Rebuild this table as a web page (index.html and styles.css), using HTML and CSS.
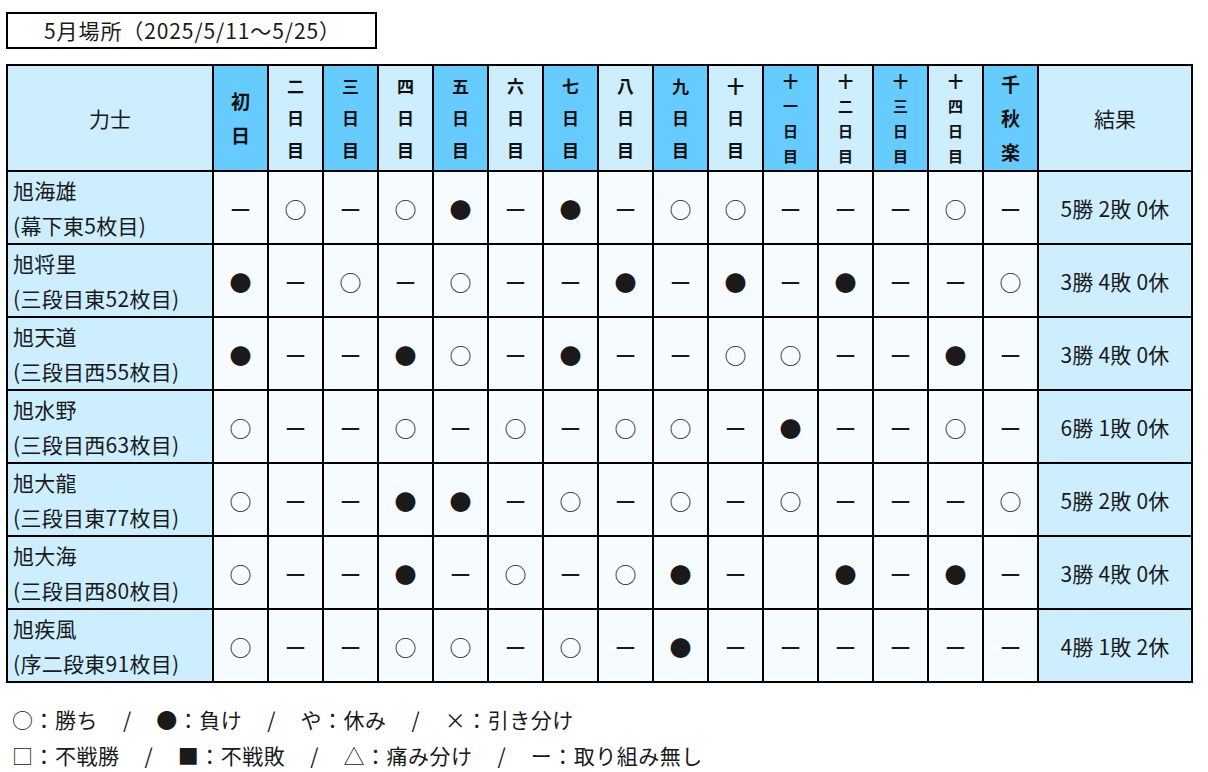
FILE: index.html
```html
<!DOCTYPE html>
<html lang="ja">
<head>
<meta charset="utf-8">
<title>5月場所</title>
<link rel="stylesheet" href="styles.css">
</head>
<body>
<div class="title">5月場所（2025/5/11～5/25）</div>
<table class="bansuke">
  <colgroup>
    <col class="c-name">
    <col class="c-day"><col class="c-day"><col class="c-day"><col class="c-day"><col class="c-day">
    <col class="c-day"><col class="c-day"><col class="c-day"><col class="c-day"><col class="c-day">
    <col class="c-day"><col class="c-day"><col class="c-day"><col class="c-day"><col class="c-day">
    <col class="c-res">
  </colgroup>
  <thead>
    <tr>
      <th class="h-name">力士</th>
      <th class="day odd big">初<br>日</th>
      <th class="day">二<br>日<br>目</th>
      <th class="day odd">三<br>日<br>目</th>
      <th class="day">四<br>日<br>目</th>
      <th class="day odd">五<br>日<br>目</th>
      <th class="day">六<br>日<br>目</th>
      <th class="day odd">七<br>日<br>目</th>
      <th class="day">八<br>日<br>目</th>
      <th class="day odd">九<br>日<br>目</th>
      <th class="day">十<br>日<br>目</th>
      <th class="day odd small">十<br>一<br>日<br>目</th>
      <th class="day small">十<br>二<br>日<br>目</th>
      <th class="day odd small">十<br>三<br>日<br>目</th>
      <th class="day small">十<br>四<br>日<br>目</th>
      <th class="day odd big">千<br>秋<br>楽</th>
      <th class="h-name">結果</th>
    </tr>
  </thead>
  <tbody>
    <tr>
      <td class="name">旭海雄<br>(幕下東5枚目)</td>
      <td>ー</td><td>○</td><td>ー</td><td>○</td><td>●</td><td>ー</td><td>●</td><td>ー</td><td>○</td><td>○</td><td>ー</td><td>ー</td><td>ー</td><td>○</td><td>ー</td>
      <td class="res">5勝 2敗 0休</td>
    </tr>
    <tr>
      <td class="name">旭将里<br>(三段目東52枚目)</td>
      <td>●</td><td>ー</td><td>○</td><td>ー</td><td>○</td><td>ー</td><td>ー</td><td>●</td><td>ー</td><td>●</td><td>ー</td><td>●</td><td>ー</td><td>ー</td><td>○</td>
      <td class="res">3勝 4敗 0休</td>
    </tr>
    <tr>
      <td class="name">旭天道<br>(三段目西55枚目)</td>
      <td>●</td><td>ー</td><td>ー</td><td>●</td><td>○</td><td>ー</td><td>●</td><td>ー</td><td>ー</td><td>○</td><td>○</td><td>ー</td><td>ー</td><td>●</td><td>ー</td>
      <td class="res">3勝 4敗 0休</td>
    </tr>
    <tr>
      <td class="name">旭水野<br>(三段目西63枚目)</td>
      <td>○</td><td>ー</td><td>ー</td><td>○</td><td>ー</td><td>○</td><td>ー</td><td>○</td><td>○</td><td>ー</td><td>●</td><td>ー</td><td>ー</td><td>○</td><td>ー</td>
      <td class="res">6勝 1敗 0休</td>
    </tr>
    <tr>
      <td class="name">旭大龍<br>(三段目東77枚目)</td>
      <td>○</td><td>ー</td><td>ー</td><td>●</td><td>●</td><td>ー</td><td>○</td><td>ー</td><td>○</td><td>ー</td><td>○</td><td>ー</td><td>ー</td><td>ー</td><td>○</td>
      <td class="res">5勝 2敗 0休</td>
    </tr>
    <tr>
      <td class="name">旭大海<br>(三段目西80枚目)</td>
      <td>○</td><td>ー</td><td>ー</td><td>●</td><td>ー</td><td>○</td><td>ー</td><td>○</td><td>●</td><td>ー</td><td></td><td>●</td><td>ー</td><td>●</td><td>ー</td>
      <td class="res">3勝 4敗 0休</td>
    </tr>
    <tr>
      <td class="name">旭疾風<br>(序二段東91枚目)</td>
      <td>○</td><td>ー</td><td>ー</td><td>○</td><td>○</td><td>ー</td><td>○</td><td>ー</td><td>●</td><td>ー</td><td>ー</td><td>ー</td><td>ー</td><td>ー</td><td>ー</td>
      <td class="res">4勝 1敗 2休</td>
    </tr>
  </tbody>
</table>
<div class="legend">
  <p class="line"><span class="item">○：勝ち</span><span class="sep">/</span><span class="item">●：負け</span><span class="sep">/</span><span class="item">や：休み</span><span class="sep">/</span><span class="item">×：引き分け</span></p>
  <p class="line"><span class="item">□：不戦勝</span><span class="sep">/</span><span class="item">■：不戦敗</span><span class="sep">/</span><span class="item">△：痛み分け</span><span class="sep">/</span><span class="item">ー：取り組み無し</span></p>
</div>
</body>
</html>
```
FILE: styles.css
```css
html, body {
  margin: 0;
  padding: 0;
  background: #ffffff;
}
body {
  padding: 12px 6px 0 6px;
  font-family: "Noto Sans CJK JP", "Noto Sans", sans-serif;
  color: #1a1a1a;
}
.title {
  box-sizing: border-box;
  width: 371px;
  height: 37px;
  border: 2px solid #000;
  font-size: 21px;
  line-height: 32px;
  letter-spacing: 0.9px;
  text-align: center;
  padding-left: 2px;
  white-space: nowrap;
}
.bansuke {
  margin-top: 15px;
  border-collapse: collapse;
  table-layout: fixed;
  width: 1185px;
  border: 2px solid #000;
}
.c-name { width: 206px; }
.c-day { width: 55px; }
.c-res { width: 154px; }
.bansuke th,
.bansuke td {
  border: 2px solid #000;
  padding: 0;
  text-align: center;
  vertical-align: middle;
}
.bansuke thead tr { height: 106px; }
.bansuke tbody tr { height: 73px; }
.h-name {
  background: #cceeff;
  font-weight: normal;
  font-size: 21px;
}
.day {
  background: #cceeff;
  font-weight: bold;
  font-size: 17px;
  line-height: 32px;
  color: #111;
}
.day.odd { background: #66ccff; }
.day.big { font-size: 19px; line-height: 34px; }
.day.small { font-size: 15px; line-height: 25px; }
.bansuke td {
  background: #f6fbff;
  font-size: 22px;
}
.bansuke td.name {
  background: #cceeff;
  text-align: left;
  padding-left: 5px;
  line-height: 35px;
  font-size: 21px;
  white-space: nowrap;
  letter-spacing: 0.3px;
}
.bansuke td.res {
  background: #cceeff;
  font-size: 21px;
  letter-spacing: 0.2px;
}
.legend {
  margin-top: 18px;
  padding-left: 6px;
  font-size: 21px;
  line-height: 36px;
}
.legend .line {
  margin: 0;
  white-space: nowrap;
  display: flex;
}
.legend .item {
  letter-spacing: 0.5px;
}
.legend .sep {
  margin: 0 25px;
}
```
